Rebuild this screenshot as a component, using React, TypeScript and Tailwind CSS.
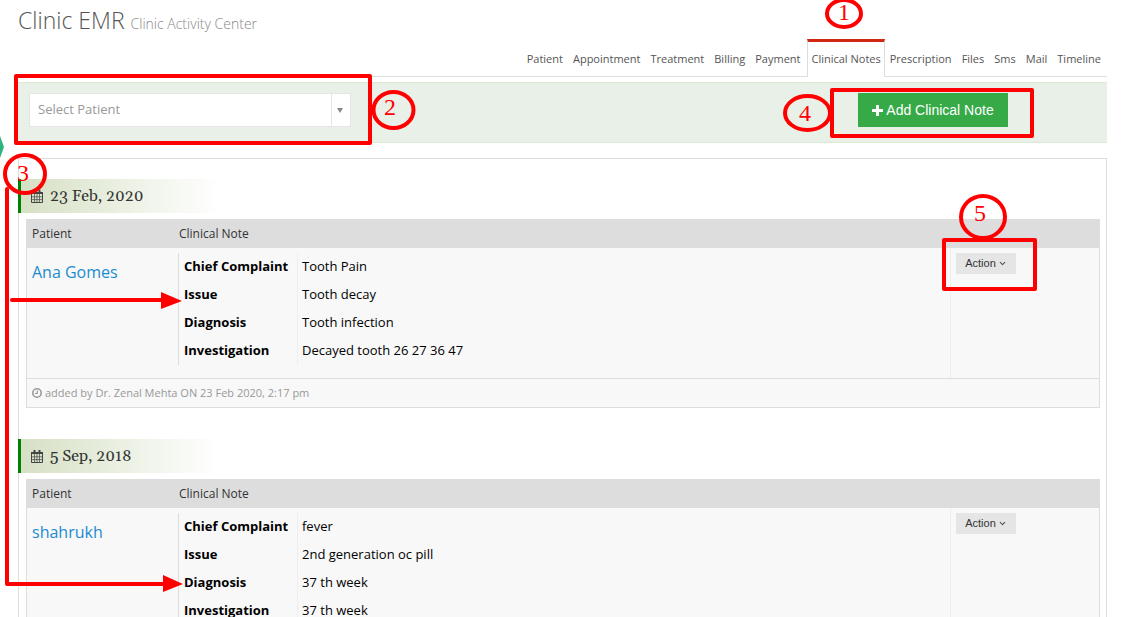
import React from "react";
import { FiChevronDown } from "react-icons/fi";

const tabs = [
  "Patient",
  "Appointment",
  "Treatment",
  "Billing",
  "Payment",
  "Clinical Notes",
  "Prescription",
  "Files",
  "Sms",
  "Mail",
  "Timeline",
];

interface ClinicalRecord {
  date: string;
  patient: string;
  notes: [string, string][];
  addedBy: string;
}

const records: ClinicalRecord[] = [
  {
    date: "23 Feb, 2020",
    patient: "Ana Gomes",
    notes: [
      ["Chief Complaint", "Tooth Pain"],
      ["Issue", "Tooth decay"],
      ["Diagnosis", "Tooth infection"],
      ["Investigation", "Decayed tooth 26 27 36 47"],
    ],
    addedBy: "added by Dr. Zenal Mehta ON 23 Feb 2020, 2:17 pm",
  },
  {
    date: "5 Sep, 2018",
    patient: "shahrukh",
    notes: [
      ["Chief Complaint", "fever"],
      ["Issue", "2nd generation oc pill"],
      ["Diagnosis", "37 th week"],
      ["Investigation", "37 th week"],
    ],
    addedBy: "",
  },
];

const CalendarIcon: React.FC = () => (
  <svg width="12" height="13" viewBox="0 0 12 13" fill="none" stroke="#444" aria-hidden="true">
    <path d="M.5 2.5h11v10H.5z" />
    <path d="M0 3h12" strokeWidth="2" />
    <path d="M3.5 0v3M8.5 0v3" strokeWidth="2" />
    <path d="M3.5 4v8M6 4v8M8.5 4v8M1 6.8h10M1 9.6h10" strokeWidth=".7" />
  </svg>
);

const ClockIcon: React.FC = () => (
  <svg width="10" height="10" viewBox="0 0 10 10" fill="none" stroke="#999" aria-hidden="true">
    <circle cx="5" cy="5" r="4.200" strokeWidth="1.600" />
    <path d="M5.300 2.500v3H3" strokeWidth="1.200" />
  </svg>
);

const PlusIcon: React.FC = () => (
  <svg width="11" height="11" viewBox="0 0 11 11" fill="#fff" aria-hidden="true">
    <path d="M4.600 0h1.800q.6 0 .6.6V4h3.400q.6 0 .6.6v1.800q0 .6-.6.6H7v3.400q0 .6-.6.6H4.600q-.6 0-.6-.6V7H.6Q0 7 0 6.400V4.600Q0 4 .6 4H4V.6q0-.6.6-.6z" />
  </svg>
);

const RecordCard: React.FC<{ record: ClinicalRecord }> = ({ record }) => (
  <section className="mb-[31px]">
    <h2 className="flex h-[34px] w-[200px] items-center gap-[7px] border-l-[3px] border-[#008000] bg-linear-to-r from-[#d6e0c5] to-white pl-[10px] font-[Georgia,Gelasio,'Liberation_Serif',serif] text-[16px] text-[#333]">
      <CalendarIcon />
      {record.date}
    </h2>
    <div className="mt-[6px] pr-[6px] pl-[8px]">
      <table className="w-full table-fixed border-separate border-spacing-0 border border-[#ddd] bg-[#f8f8f8] text-left text-[12px]">
        <thead className="bg-[#ddd] text-[#333]">
          <tr className="h-7">
            <th className="w-[151px] pl-[5px] font-normal">Patient</th>
            <th className="pl-px font-normal">Clinical Note</th>
            <th className="w-[149px]" aria-label="Actions" />
          </tr>
        </thead>
        <tbody>
          <tr className="align-top">
            <td className="pt-3 pl-[5px]">
              <a href="#patient" className="text-[16px] leading-6 text-[#1b8bd0]">
                {record.patient}
              </a>
            </td>
            <td className="pt-[5px] pb-[13px]">
              <table className="border-l border-[#ddd] text-[13px] text-black">
                <tbody>
                  {record.notes.map(([label, value]) => (
                    <tr key={label} className="h-7">
                      <th className="w-[119px] pl-[5px] font-bold">{label}</th>
                      <td className="border-l border-[#eee] pl-1">{value}</td>
                    </tr>
                  ))}
                </tbody>
              </table>
            </td>
            <td className="border-l border-[#eee] pt-[5px] pl-[5px]">
              <button
                type="button"
                className="flex h-[21px] w-[60px] items-center justify-center gap-[2px] bg-[#e5e5e5] font-['Liberation_Sans',sans-serif] text-[11px] text-[#333]"
              >
                Action <FiChevronDown size={9} strokeWidth={3} color="#555" />
              </button>
            </td>
          </tr>
        </tbody>
        <tfoot>
          <tr className="h-[29px]">
            <td colSpan={3} className="border-t border-[#ddd] pl-[5px] text-[11px] text-[#999]">
              <span className="flex items-center gap-[3px]">
                <ClockIcon />
                {record.addedBy}
              </span>
            </td>
          </tr>
        </tfoot>
      </table>
    </div>
  </section>
);

const marks = [
  { n: 1, cx: 844, cy: 13.5, rx: 17, ry: 13.5, x: 838, y: 20 },
  { n: 2, cx: 393.5, cy: 110, rx: 20, ry: 18, x: 384, y: 115 },
  { n: 3, cx: 25, cy: 174, rx: 20, ry: 19, x: 17, y: 181 },
  { n: 4, cx: 807.5, cy: 113, rx: 22.5, ry: 17, x: 799, y: 121 },
  { n: 5, cx: 983, cy: 217, rx: 22, ry: 21, x: 974, y: 221 },
];

// Red numbered call-outs drawn over the page
const Callouts: React.FC = () => (
  <svg
    className="pointer-events-none absolute top-0 left-0"
    width="1121"
    height="617"
    fill="none"
    stroke="#f00"
    strokeWidth="4"
    strokeLinejoin="round"
    strokeLinecap="round"
  >
    <path d="M0 136l4 11-4 11z" fill="#2bb57b" stroke="none" />
    <rect x="16" y="76" width="354" height="67" />
    <rect x="832" y="90" width="200" height="46" />
    <rect x="944" y="240" width="91" height="49" />
    <path d="M7 189v395h158M12 300h150" />
    <path d="M161 292l21 9-21 8zM163 575l20 9-20 8z" fill="#f00" stroke="none" />
    {marks.map((m) => (
      <g key={m.n}>
        <ellipse cx={m.cx} cy={m.cy} rx={m.rx} ry={m.ry} />
        <text
          x={m.x}
          y={m.y}
          fill="#f00"
          stroke="none"
          className="font-['Liberation_Serif',serif] text-[24px] font-normal"
        >
          {m.n}
        </text>
      </g>
    ))}
  </svg>
);

const App: React.FC = () => {
  return (
    <div className="relative h-screen overflow-hidden bg-white pr-[14px] pl-[18px] font-['Open_Sans',sans-serif] text-[#333]">
      <header className="pt-1">
        <h1 className="text-[23px] leading-8 font-light text-[#555]">
          Clinic EMR{" "}
          <small className="text-[14px] leading-none text-[#888]">Clinic Activity Center</small>
        </h1>
      </header>
      <nav className="mt-[3px] flex justify-end border-b border-[#ddd] pr-px text-[11px] text-[#555]">
        {tabs.map((tab) => (
          <a
            key={tab}
            href="#tab"
            className={
              tab === "Clinical Notes"
                ? "-mb-px ml-[2px] h-[38px] border-x border-t-[3px] border-x-[#ddd] border-t-[#d12610] bg-white px-[3px] leading-[34px]"
                : "h-[37px] border-t-[3px] border-transparent px-[5px] leading-[34px]"
            }
          >
            {tab}
          </a>
        ))}
      </nav>
      <div className="mt-[5px] flex items-center justify-between border-y border-[#dbe8d4] bg-[#e8f0e8] pt-[10px] pr-[99px] pb-[15px] pl-[11px]">
        <div className="relative h-[34px] w-[322px]">
          <select
            aria-label="Select Patient"
            className="h-full w-full appearance-none border border-[#e5e5e5] bg-white px-2 text-[13px] text-[#999]"
          >
            <option>Select Patient</option>
          </select>
          <span className="pointer-events-none absolute top-0 right-0 flex h-full w-5 items-center justify-center border-l border-[#e5e5e5] pr-[3px]">
            <svg width="6" height="5" fill="#888" aria-hidden="true">
              <path d="M0 0h6L3 5z" />
            </svg>
          </span>
        </div>
        <button
          type="button"
          className="flex h-[34px] w-[150px] items-center justify-center gap-[3px] bg-[#35aa47] font-['Liberation_Sans',sans-serif] text-[14px] text-white"
        >
          <PlusIcon /> Add Clinical Note
        </button>
      </div>
      <main className="mt-[15px] border border-[#ddd] pt-5">
        <div className="-ml-px">
          {records.map((record) => (
            <RecordCard key={record.date} record={record} />
          ))}
        </div>
      </main>
      <Callouts />
    </div>
  );
};

export default App;
